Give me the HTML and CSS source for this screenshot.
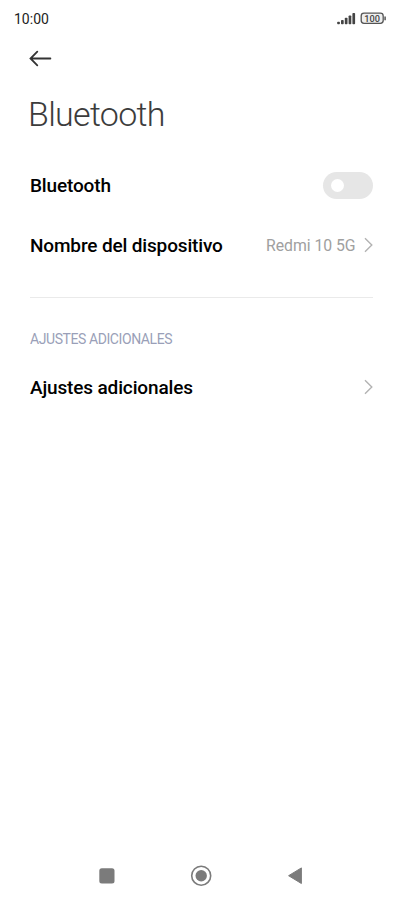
FILE: index.html
```html
<!DOCTYPE html>
<html lang="es">
<head>
<meta charset="utf-8">
<title>Bluetooth</title>
<link rel="stylesheet" href="styles.css">
</head>
<body>
<div class="screen">
  <header class="status">
    <span class="time">10:00</span>
    <svg class="status-icons" width="50" height="14" viewBox="337 12 50 14">
      <g fill="#444"><rect x="337.2" y="21.8" width="2.7" height="2.4" rx=".8"/><rect x="341" y="20" width="2.7" height="4.2" rx=".8"/><rect x="344.8" y="17.8" width="2.7" height="6.4" rx=".8"/><rect x="348.6" y="15.4" width="2.7" height="8.8" rx=".8"/><rect x="352.4" y="13" width="2.7" height="11.2" rx=".8"/></g>
      <rect x="361.2" y="13.2" width="22" height="10.2" rx="2.8" fill="#efefef" stroke="#555" stroke-width="1.3"/>
      <path d="M385.1 16.6v3.6" stroke="#555" stroke-width="1.5"/>
      <text class="battery" x="372.2" y="21.8" text-anchor="middle">100</text>
    </svg>
  </header>
  <svg class="back" width="24" height="18" viewBox="29 50 24 18"><path d="M50.4 58.5H30.8M37.3 51.7L30.5 58.5L37.3 65.3"/></svg>
  <h1>Bluetooth</h1>
  <main>
    <div class="row"><span class="label">Bluetooth</span><span class="switch"></span></div>
    <div class="row"><span class="label">Nombre del dispositivo</span><span class="value">Redmi 10 5G</span><svg class="chevron" width="10" height="16" viewBox="0 0 10 16"><path d="M2 1.2L8.8 8L2 14.8"/></svg></div>
    <hr>
    <h2>AJUSTES ADICIONALES</h2>
    <div class="row"><span class="label">Ajustes adicionales</span><svg class="chevron" width="10" height="16" viewBox="0 0 10 16"><path d="M2 1.2L8.8 8L2 14.8"/></svg></div>
  </main>
  <nav>
    <svg width="22" height="22" viewBox="0 0 22 22"><rect x="3.3" y="3.2" width="15.2" height="15.2" rx="2.5" fill="#7b7b7b"/></svg>
    <svg width="22" height="22" viewBox="0 0 22 22"><circle cx="11.2" cy="10.7" r="9.5" fill="none" stroke="#7b7b7b" stroke-width="1.6"/><circle cx="11.2" cy="10.7" r="5.7" fill="#7b7b7b"/></svg>
    <svg width="22" height="22" viewBox="0 0 22 22"><path d="M4.6 10.7L17.4 2.9V18.5Z" fill="#7b7b7b" stroke="#7b7b7b" stroke-width="1" stroke-linejoin="round"/></svg>
  </nav>
</div>
</body>
</html>
```
FILE: styles.css
```css
body { margin: 0; background: #fff; font-family: Roboto, sans-serif; color: #000; }
.screen { height: 900px; box-sizing: border-box; display: flex; flex-direction: column; }
.status { height: 38px; padding: 0 16px 0 14px; display: flex; align-items: center; justify-content: space-between; }
.time { font-size: 14px; font-weight: 400; color: #222; }
.battery { font-size: 9.2px; font-weight: 500; fill: #444; }
.back { margin: 12px 0 0 29px; flex: none; fill: none; stroke: #333; stroke-width: 1.8; stroke-linecap: round; }
h1 { margin: 26px 0 0 28px; font-size: 34px; line-height: 40px; font-weight: 300; letter-spacing: -.7px; color: #3c3c3c; }
main { flex: 1; padding: 21px 30px 0; }
.row { height: 60px; display: flex; align-items: center; }
.label { flex: 1; font-size: 19px; font-weight: 500; letter-spacing: -.15px; white-space: nowrap; }
.value { font-size: 15.8px; letter-spacing: -.05px; color: #a0a0a0; margin-right: 7.5px; }
.switch { width: 50px; height: 27px; border-radius: 14px; background: #e6e6e6; display: flex; align-items: center; padding-left: 8px; box-sizing: border-box; }
.switch::before { content: ""; width: 13px; height: 13px; border-radius: 50%; background: #fff; }
.chevron { fill: none; stroke: #b3b3b3; stroke-width: 1.4; }
hr { margin: 22px 0 0; border: 0; height: 1px; background: #eaeaea; }
h2 { margin: 33px 0 10px; font-size: 14px; line-height: 16px; font-weight: 400; letter-spacing: -.42px; color: #9a9fb8; }
nav { height: 48px; padding: 0 2px 0 0; display: flex; justify-content: center; gap: 72px; align-items: center; }
```
